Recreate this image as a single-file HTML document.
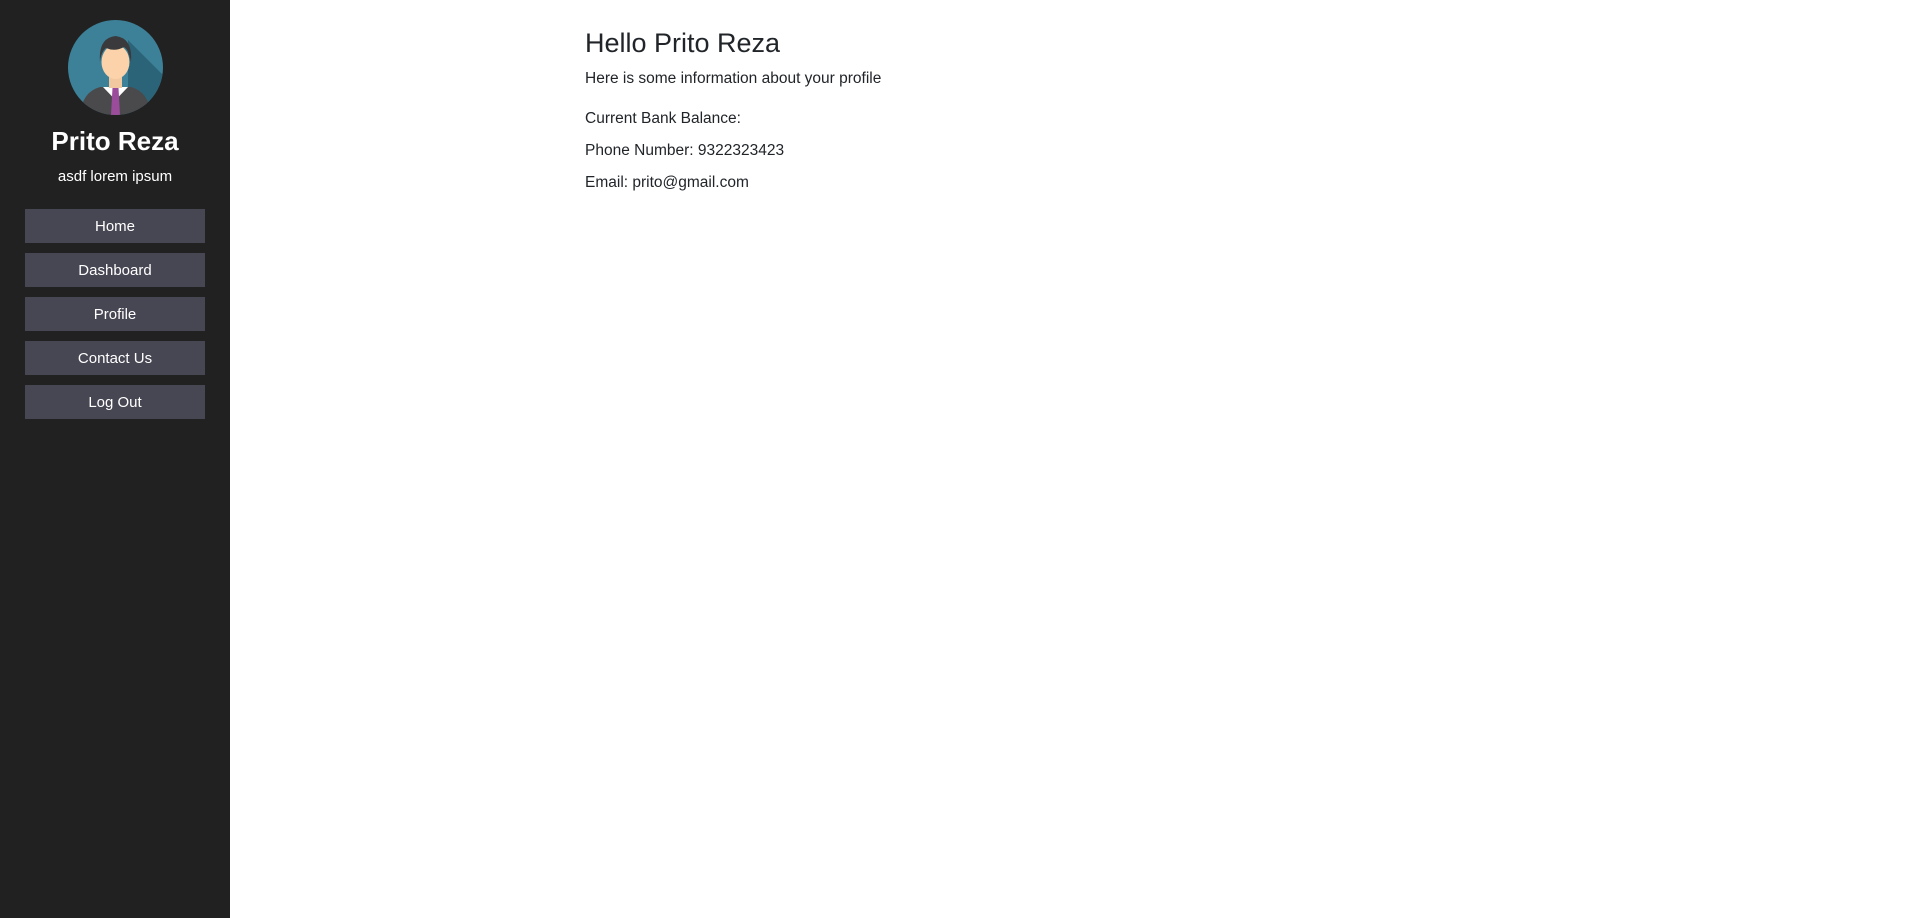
<!DOCTYPE html>
<html><head><meta charset="utf-8"><style>
*{margin:0;padding:0;box-sizing:border-box}
body{width:1920px;height:918px;font-family:"Liberation Sans",sans-serif;background:#fff;position:relative;overflow:hidden}
.side{position:absolute;left:0;top:0;width:230px;height:918px;background:#212121;color:#fff;text-align:center}
.av{position:absolute;left:68px;top:20px;width:95px;height:95px}
.name{position:absolute;left:0;width:230px;top:126px;font-size:26px;font-weight:bold}
.sub{position:absolute;left:0;width:230px;top:168px;font-size:15px}
.btn{position:absolute;left:25px;width:180px;height:34px;background:#474653;font-size:15px;line-height:36px}
.main{position:absolute;left:585px;color:#212529;font-size:15.5px}
</style></head><body>
<div class="side">
<svg class="av" viewBox="0 0 95 95">
<defs><clipPath id="c"><circle cx="47.5" cy="47.5" r="47.5"/></clipPath></defs>
<circle cx="47.5" cy="47.5" r="47.5" fill="#3d8199"/>
<g clip-path="url(#c)">
<path d="M60 20 L95 55 L95 95 L60 95Z" fill="#2b6478"/>
<path d="M12 95 Q14 72 32 67 L63 67 Q81 72 83 95Z" fill="#4a4a4c"/>
<path d="M35 67 L47.5 80 L60 67Z" fill="#fff"/>
<path d="M44.5 68 L50.5 68 L52 95 L43 95Z" fill="#9b4d9b"/>
<rect x="41" y="55" width="13" height="13" fill="#f2c8a0"/>
<ellipse cx="47.5" cy="42" rx="14" ry="17" fill="#fbd2a9"/>
<path d="M32 42 Q30 18 47.5 16 Q65 18 63 42 Q61 30 56 27 Q47 32 38 28 Q33 32 32 42Z" fill="#3a3a3c"/>
</g></svg>
<div class="name">Prito Reza</div>
<div class="sub">asdf lorem ipsum</div>
<div class="btn" style="top:209px">Home</div>
<div class="btn" style="top:253px">Dashboard</div>
<div class="btn" style="top:297px">Profile</div>
<div class="btn" style="top:341px">Contact Us</div>
<div class="btn" style="top:385px">Log Out</div>
</div>
<div class="main" style="top:28px;font-size:27px;font-weight:500">Hello Prito Reza</div>
<div class="main" style="top:70px">Here is some information about your profile</div>
<div class="main" style="top:110px">Current Bank Balance:</div>
<div class="main" style="top:142px">Phone Number: 9322323423</div>
<div class="main" style="top:174px">Email: prito@gmail.com</div>
</body></html>
